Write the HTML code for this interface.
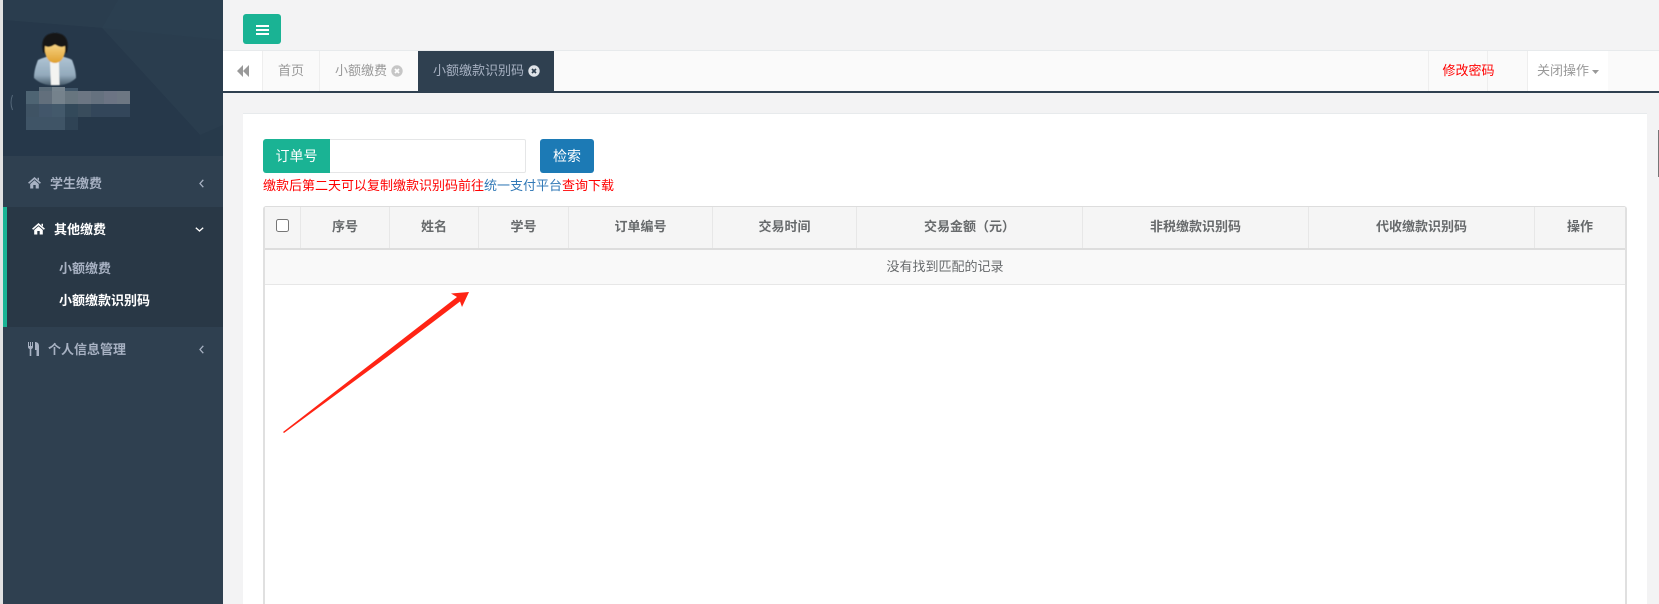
<!DOCTYPE html>
<html lang="zh-CN">
<head>
<meta charset="utf-8">
<title>小额缴款识别码</title>
<style>
html,body{margin:0;padding:0;width:1659px;height:604px;overflow:hidden;background:#f3f3f4;font-family:"Liberation Sans","Noto Sans CJK SC",sans-serif;font-size:13px;color:#676a6c}
div,span,a{position:absolute;box-sizing:border-box;white-space:nowrap}
.t{height:20px;line-height:20px}
.th{top:207px;height:41px;line-height:39px;text-align:center;font-weight:700;color:#676a6c;border-right:1px solid #e7e7e7}
svg{position:absolute;overflow:visible}
</style>
</head>
<body>
<div style="left:0;top:0;width:3px;height:604px;background:#e2e2e2"></div>

<!-- sidebar -->
<div style="left:3px;top:0;width:220px;height:604px;background:#2f4050"></div>
<svg style="left:3px;top:0" width="220" height="156" viewBox="0 0 220 156">
<rect width="220" height="156" fill="#273a4b"/>
<polygon points="0,0 220,0 220,125 197,135 99,28 0,20" fill="#2a3d4e"/>
<polygon points="99,28 115,0 220,0 220,40" fill="#2b3f50"/>
<polygon points="0,20 99,28 197,135 197,156 0,156" fill="#26384a"/>
</svg>

<!-- avatar -->
<svg style="left:0;top:0" width="140" height="135" viewBox="0 0 140 135">
<defs>
<linearGradient id="jacket" x1="0" y1="0" x2="0" y2="1"><stop offset="0" stop-color="#b0c5d5"/><stop offset="0.65" stop-color="#93aabc"/><stop offset="1" stop-color="#485c6b"/></linearGradient>
<linearGradient id="face" x1="0" y1="0" x2="0" y2="1"><stop offset="0" stop-color="#f6d283"/><stop offset="1" stop-color="#dfa02e"/></linearGradient>
<filter id="soft"><feGaussianBlur stdDeviation="0.400"/></filter>
</defs>
<g filter="url(#soft)">
<path d="M38 60 C42 58 46 57 50 56 L60 56 C64 57 69 58 72 60 C74 65 76 71 76 78 C71 83 64 85.500 55 85.500 C46 85.500 39 83 34 78 C34 71 36 65 38 60 Z" fill="url(#jacket)"/>
<path d="M50 62 L59 62 L59.500 85 L51 85 Z" fill="#f3f3f1"/>
<path d="M43.500 53 C41 46 41 33 55 33 C69 33 69 46 66.500 53 Z" fill="#141414"/>
<path d="M45 46 C49 48 52 46 55 44.500 C58 46 61 48 65 46 C66 53 63 63 55 63 C47 63 44 53 45 46 Z" fill="url(#face)"/>
</g>
<g>
<rect x="39" y="87" width="13" height="4" fill="#5a6b78"/><rect x="52" y="87" width="13" height="4" fill="#76848e"/><rect x="65" y="88" width="13" height="3" fill="#41576a"/>
<rect x="26" y="91" width="13" height="13" fill="#4e6473"/><rect x="39" y="91" width="13" height="13" fill="#626f7c"/><rect x="52" y="91" width="13" height="13" fill="#75828c"/><rect x="65" y="91" width="13" height="13" fill="#67757f"/><rect x="78" y="91" width="13" height="13" fill="#6c7683"/><rect x="91" y="91" width="13" height="13" fill="#65717f"/><rect x="104" y="91" width="13" height="13" fill="#6c7484"/><rect x="117" y="91" width="13" height="13" fill="#6d7783"/>
<rect x="26" y="104" width="13" height="13" fill="#3f5364"/><rect x="39" y="104" width="13" height="13" fill="#42566a"/><rect x="52" y="104" width="13" height="13" fill="#43596b"/><rect x="65" y="104" width="13" height="13" fill="#33495a"/><rect x="78" y="104" width="13" height="13" fill="#394c5c"/><rect x="91" y="104" width="39" height="13" fill="#33465a"/>
<rect x="26" y="117" width="39" height="13" fill="#3f5466"/><rect x="65" y="117" width="13" height="13" fill="#2f4355"/>
</g>
<path d="M12.500 95 C10.500 100 10.500 105 12.500 110" stroke="#55687a" stroke-width="1" fill="none"/>
</svg>

<!-- menu -->
<div style="left:3px;top:156px;width:220px;height:51px;background:#2f4050"></div>
<div style="left:3px;top:207px;width:220px;height:120px;background:#293846;border-left:4px solid #1ab394"></div>

<svg style="left:28px;top:177px" width="13" height="12" viewBox="0 0 13 12"><path d="M6.500 0 L13 5.800 L11.800 6.800 L6.500 2.200 L1.200 6.800 L0 5.800 Z M2.200 7 L6.500 3.300 L10.800 7 L10.800 11.500 L7.700 11.500 L7.700 8 L5.300 8 L5.300 11.500 L2.200 11.500 Z M9.500 .8 H11 V3.600 L9.500 2.300 Z" fill="#a7b1c2"/></svg>
<div class="t" style="left:50px;top:174px;color:#a7b1c2;font-weight:600">学生缴费</div>
<svg style="left:199px;top:179px" width="5" height="9" viewBox="0 0 5 9"><path d="M4.300 .8 L1 4.500 L4.300 8.200" fill="none" stroke="#a7b1c2" stroke-width="1.300"/></svg>

<svg style="left:32px;top:223px" width="13" height="12" viewBox="0 0 13 12"><path d="M6.500 0 L13 5.800 L11.800 6.800 L6.500 2.200 L1.200 6.800 L0 5.800 Z M2.200 7 L6.500 3.300 L10.800 7 L10.800 11.500 L7.700 11.500 L7.700 8 L5.300 8 L5.300 11.500 L2.200 11.500 Z M9.500 .8 H11 V3.600 L9.500 2.300 Z" fill="#fff"/></svg>
<div class="t" style="left:54px;top:220px;color:#fff;font-weight:700">其他缴费</div>
<svg style="left:195px;top:227px" width="9" height="5" viewBox="0 0 9 5"><path d="M.8 .8 L4.500 4 L8.200 .8" fill="none" stroke="#fff" stroke-width="1.300"/></svg>

<div class="t" style="left:59px;top:259px;color:#a7b1c2;font-weight:600">小额缴费</div>
<div class="t" style="left:59px;top:291px;color:#fff;font-weight:700">小额缴款识别码</div>

<svg style="left:28px;top:342px" width="11" height="14" viewBox="0 0 11 14"><path d="M0 0 H1 V4 H2 V0 H3 V4 H4 V0 H5 V5 C5 6 4 7 3.300 7 V14 H1.700 V7 C1 7 0 6 0 5 Z M7 0 C9 0 11 1 11 4 V14 H8.500 V8 H7 Z" fill="#a7b1c2"/></svg>
<div class="t" style="left:48px;top:340px;color:#a7b1c2;font-weight:600">个人信息管理</div>
<svg style="left:199px;top:345px" width="5" height="9" viewBox="0 0 5 9"><path d="M4.300 .8 L1 4.500 L4.300 8.200" fill="none" stroke="#a7b1c2" stroke-width="1.300"/></svg>

<!-- top bar -->
<div style="left:243px;top:14px;width:38px;height:30px;background:#1ab394;border-radius:3px"></div>
<div style="left:256px;top:25px;width:13px;height:2px;background:#fff"></div>
<div style="left:256px;top:29px;width:13px;height:2px;background:#fff"></div>
<div style="left:256px;top:33px;width:13px;height:2px;background:#fff"></div>

<!-- tabs -->
<div style="left:223px;top:50px;width:1436px;height:1px;background:#e7eaec"></div>
<div style="left:223px;top:51px;width:1436px;height:40px;background:#fafafa"></div>
<div style="left:223px;top:51px;width:39px;height:40px;background:#fff"></div>
<div style="left:262px;top:51px;width:1px;height:40px;background:#eee"></div>
<div style="left:319px;top:51px;width:1px;height:40px;background:#eee"></div>
<svg style="left:237px;top:65px" width="12" height="12" viewBox="0 0 12 12"><path d="M6 0 V12 L0 6 Z M12 0 V12 L6 6 Z" fill="#999"/></svg>
<div class="t" style="left:278px;top:61px;color:#999">首页</div>
<div class="t" style="left:335px;top:61px;color:#999">小额缴费</div>
<svg style="left:390.500px;top:65px" width="12" height="12" viewBox="0 0 12 12"><circle cx="6" cy="6" r="5.700" fill="#c6c6c6"/><path d="M4 4 L8 8 M8 4 L4 8" stroke="#fff" stroke-width="1.700"/></svg>
<div style="left:418px;top:51px;width:136px;height:42px;background:#2f4050"></div>
<div class="t" style="left:433px;top:61px;color:#a7b1c2">小额缴款识别码</div>
<svg style="left:527.500px;top:65px" width="12" height="12" viewBox="0 0 12 12"><circle cx="6" cy="6" r="5.700" fill="#dfe3e8"/><path d="M4 4 L8 8 M8 4 L4 8" stroke="#2f4050" stroke-width="1.700"/></svg>

<div style="left:1428px;top:51px;width:1px;height:42px;background:#eee"></div>
<div style="left:1487px;top:51px;width:1px;height:40px;background:#eee"></div>
<div style="left:1527px;top:51px;width:1px;height:40px;background:#eee"></div>
<div style="left:1528px;top:51px;width:80px;height:40px;background:#fff"></div>
<div class="t" style="left:1442.500px;top:61px;color:#f00">修改密码</div>
<div class="t" style="left:1537px;top:61px;color:#999">关闭操作</div>
<svg style="left:1592px;top:70px" width="7" height="4" viewBox="0 0 7 4"><path d="M0 0 H7 L3.500 4 Z" fill="#999"/></svg>
<div style="left:223px;top:91px;width:1436px;height:2px;background:#2f4050"></div>

<!-- panel -->
<div style="left:243px;top:113px;width:1404px;height:491px;background:#fff;border-top:1px solid #e7eaec"></div>
<div style="left:1658px;top:130px;width:1px;height:47px;background:#777"></div>

<div style="left:263px;top:139px;width:67px;height:34px;background:#1ab394;border-radius:3px 0 0 3px;color:#fff;font-size:14px;line-height:34px;text-align:center">订单号</div>
<div style="left:330px;top:139px;width:196px;height:34px;background:#fff;border:1px solid #e5e6e7;border-left:0;border-radius:0 2px 2px 0"></div>
<div style="left:540px;top:139px;width:54px;height:34px;background:#1c7ab5;border-radius:3px;color:#fff;font-size:14px;line-height:34px;text-align:center">检索</div>
<div class="t" style="left:263px;top:176px;color:#f00">缴款后第二天可以复制缴款识别码前往<span style="position:static;color:#337ab7">统一支付平台</span>查询下载</div>

<!-- table -->
<div style="left:263px;top:206px;width:1364px;height:398px;background:#fff;border:2px solid #e0e0e0;border-width:1px 2px 0 2px;border-top-color:#ddd;border-radius:3px 3px 0 0"></div>
<div style="left:265px;top:207px;width:1360px;height:41px;background:#f5f5f5"></div>
<div style="left:265px;top:248px;width:1360px;height:2px;background:#ddd"></div>
<div style="left:265px;top:250px;width:1360px;height:35px;background:#f9f9f9;border-bottom:1px solid #e7e7e7"></div>
<div style="left:265px;top:250px;width:1360px;height:34px;line-height:34px;text-align:center;color:#676a6c">没有找到匹配的记录</div>

<div class="th" style="left:265px;width:36px"></div>
<div style="left:276px;top:219px;width:13px;height:13px;background:#fff;border:1px solid #767676;border-radius:2.500px"></div>
<div class="th" style="left:301px;width:89px">序号</div>
<div class="th" style="left:390px;width:89px">姓名</div>
<div class="th" style="left:479px;width:90px">学号</div>
<div class="th" style="left:569px;width:144px">订单编号</div>
<div class="th" style="left:713px;width:144px">交易时间</div>
<div class="th" style="left:857px;width:226px">交易金额（元）</div>
<div class="th" style="left:1083px;width:226px">非税缴款识别码</div>
<div class="th" style="left:1309px;width:226px">代收缴款识别码</div>
<div class="th" style="left:1535px;width:90px;border-right:0">操作</div>

<!-- arrow -->
<svg style="left:0;top:0" width="1659" height="604" viewBox="0 0 1659 604">
<polygon points="283,432 457,297 451,293.500 469,292 462,307 460,301.500 387,357 284,433" fill="#ff2414"/>
</svg>
</body>
</html>
